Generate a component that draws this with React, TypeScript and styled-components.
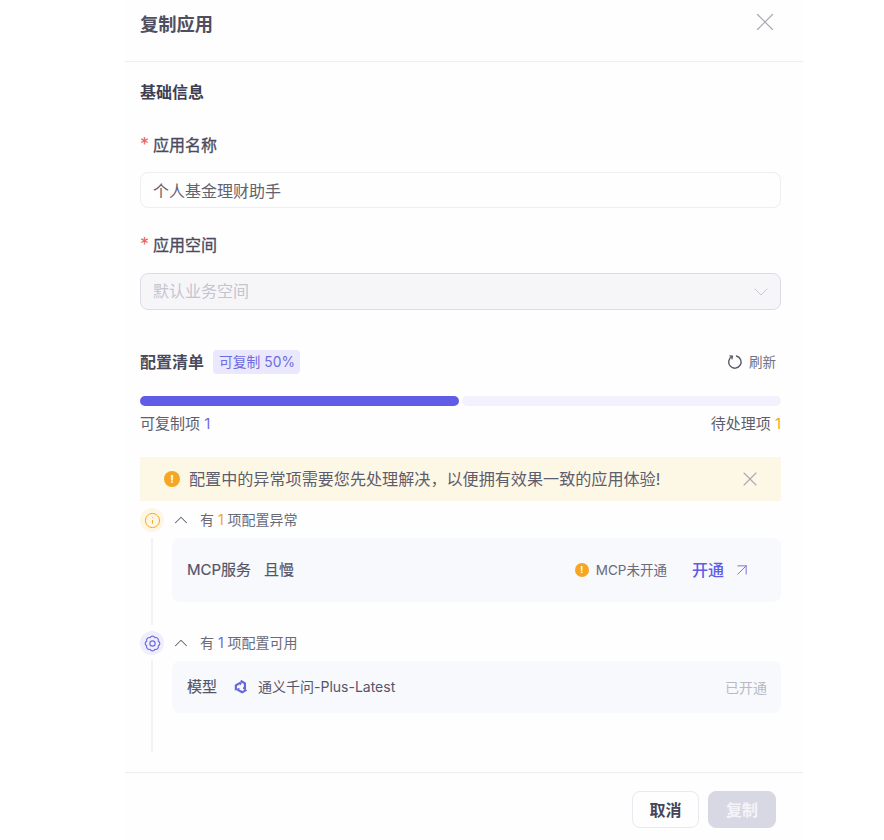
import React from 'react';
import styled, { createGlobalStyle } from 'styled-components';
import { ArrowUpRight, ChevronDown, ChevronUp, Info, X } from 'lucide-react';

const GlobalStyle = createGlobalStyle`
  html, body {
    margin: 0;
    background: #ffffff;
    font-family: Inter, "Noto Sans CJK SC", sans-serif;
  }
`;

const Modal = styled.div`
  box-sizing: border-box;
  width: 678px;
  height: 840px;
  margin-left: 125px;
  background: #fefefe;
  display: flex;
  flex-direction: column;
`;

const Header = styled.header`
  box-sizing: border-box;
  height: 62px;
  padding: 0 23px 12px 15px;
  border-bottom: 1px solid #eeeef2;
  display: flex;
  align-items: center;
  justify-content: space-between;
`;

const Title = styled.h1`
  margin: 0;
  padding-bottom: 2px;
  font-size: 18.3px;
  line-height: 26px;
  font-weight: 600;
  color: #4f4f61;
`;

const CloseIcon = styled(X)`
  color: #a6a6b3;
  margin-top: -5px;
`;

const Body = styled.main`
  flex: 1;
  padding: 18px 22px 0 15px;
  display: flex;
  flex-direction: column;
`;

const SectionTitle = styled.h2`
  margin: 0 0 29px;
  font-size: 16px;
  line-height: 24px;
  font-weight: 600;
  color: #3f3f52;
`;

const FieldLabel = styled.label`
  display: block;
  font-size: 16px;
  line-height: 24px;
  color: #4a4a5c;
  -webkit-text-stroke: 0.3px #4a4a5c;
  margin-bottom: 15px;
`;

const Star = styled.span`
  display: inline-block;
  width: 13px;
  font-size: 18px;
  color: #f0605e;
  -webkit-text-stroke: 0;
`;

const TextBox = styled.div<{ $disabled?: boolean }>`
  box-sizing: border-box;
  height: ${p => (p.$disabled ? 37 : 36)}px;
  margin-top: ${p => (p.$disabled ? 1 : 0)}px;
  margin-bottom: ${p => (p.$disabled ? 40 : 25)}px;
  padding: 0 12px;
  border: 1px solid ${p => (p.$disabled ? '#dcdce6' : '#eeeef3')};
  border-radius: 8px;
  background: ${p => (p.$disabled ? '#f6f6f9' : '#fefefe')};
  color: ${p => (p.$disabled ? '#c4c4cf' : '#62626f')};
  font-size: 16px;
  display: flex;
  align-items: center;
  justify-content: space-between;
`;

const Placeholder = styled.span`
  padding-bottom: 3px;
`;

const SelectArrow = styled(ChevronDown)`
  color: #c9c9d4;
  margin-right: -5px;
`;

const ListHeader = styled.div`
  height: 24px;
  display: flex;
  align-items: center;
  margin-bottom: 22px;
`;

const ListTitle = styled.span`
  padding-bottom: 2px;
  font-size: 16px;
  font-weight: 600;
  color: #4a4a5c;
  margin-right: 9px;
`;

const Tag = styled.span`
  height: 24px;
  padding: 0 5px 0 6px;
  border-radius: 4px;
  background: #e9e8fc;
  color: #6e6bdf;
  font-size: 13.8px;
  line-height: 24px;
`;

const Refresh = styled.span`
  margin-left: auto;
  margin-right: 5px;
  display: flex;
  align-items: center;
  gap: 6px;
  font-size: 13.5px;
  color: #70707e;
`;

const RefreshLabel = styled.span`
  padding-bottom: 2px;
`;

const Progress = styled.div`
  height: 10px;
  display: flex;
  gap: 3px;
`;

const ProgressPart = styled.div<{ $done?: boolean }>`
  flex: 1;
  border-radius: 5px;
  background: ${p => (p.$done ? '#5f5ce6' : '#f2f1fd')};
`;

const Counts = styled.div`
  box-sizing: border-box;
  height: 22px;
  padding-bottom: 2px;
  margin-top: 6px;
  margin-bottom: 23px;
  display: flex;
  justify-content: space-between;
  align-items: center;
  font-size: 15px;
  color: #5d5d6d;
`;

const Num = styled.span<{ $warn?: boolean }>`
  color: ${p => (p.$warn ? '#f5a623' : '#6e6bdf')};
`;

const Notice = styled.div`
  box-sizing: border-box;
  height: 44px;
  margin-bottom: 7px;
  padding: 0 24px;
  background: #fdf7e6;
  display: flex;
  align-items: center;
  gap: 9px;
  font-size: 16.1px;
  color: #5d5d6d;
`;

const NoticeText = styled.span`
  flex: 1;
  padding-bottom: 2px;
`;

const NoticeClose = styled(X)`
  color: #a9a9b2;
  margin-right: -5px;
`;

const WarnDot = styled.span<{ $size: number }>`
  flex: none;
  width: ${p => p.$size}px;
  height: ${p => p.$size}px;
  border-radius: 50%;
  background: #f5a623;
  color: #ffffff;
  font-size: ${p => p.$size - 5}px;
  line-height: ${p => p.$size}px;
  font-weight: 700;
  text-align: center;
`;

const Group = styled.section<{ $height: number }>`
  height: ${p => p.$height}px;
  display: grid;
  grid-template-columns: 24px 1fr;
  column-gap: 8px;
`;

const Rail = styled.div<{ $lineGap: number; $lineEnd: number }>`
  display: flex;
  flex-direction: column;
  align-items: center;
  row-gap: ${p => p.$lineGap}px;
  padding-bottom: ${p => p.$lineEnd}px;
`;

const RailIcon = styled.span<{ $warn?: boolean }>`
  flex: none;
  width: 24px;
  height: 24px;
  border-radius: 50%;
  background: ${p => (p.$warn ? '#fef6e4' : '#efeefd')};
  color: ${p => (p.$warn ? '#f5a623' : '#6e6bdf')};
  display: flex;
  align-items: center;
  justify-content: center;
`;

const RailLine = styled.div`
  flex: 1;
  width: 2px;
  background: #f3f3f6;
`;

const GroupHead = styled.div`
  height: 24px;
  margin-bottom: 6px;
  display: flex;
  align-items: center;
  gap: 8px;
  font-size: 14px;
  color: #6a6a79;
`;

const GroupText = styled.span`
  padding-bottom: 2px;
`;

const Fold = styled(ChevronUp)`
  color: #5d5d6d;
  margin-left: -2px;
`;

const Card = styled.div<{ $height: number }>`
  box-sizing: border-box;
  height: ${p => p.$height}px;
  padding: 0 14px 0 15px;
  border-radius: 8px;
  background: #f8f9fc;
  display: flex;
  align-items: center;
  font-size: 15px;
  color: #55556a;
`;

const CardName = styled.span`
  -webkit-text-stroke: 0.2px #55556a;
  margin-right: 13px;
  padding-bottom: 3px;
`;

const LogoMark = styled.svg`
  margin-left: 3px;
`;

const ModelName = styled.span`
  font-size: 14px;
  margin-left: 9px;
  padding-bottom: 2px;
`;

const CardRight = styled.div`
  margin-left: auto;
  display: flex;
  align-items: center;
  font-size: 14px;
`;

const Status = styled.span`
  font-size: 13.5px;
  margin-left: 7px;
  margin-right: 25px;
  padding-bottom: 2px;
  color: #6a6a79;
`;

const OpenLink = styled.a`
  font-size: 16px;
  font-weight: 500;
  color: #5f5ce6;
  margin-right: 8px;
  padding-bottom: 2px;
`;

const OpenArrow = styled(ArrowUpRight)`
  color: #6e6bdf;
  margin-right: 15px;
`;

const Muted = styled.span`
  color: #b9b9c6;
`;

const Footer = styled.footer`
  box-sizing: border-box;
  height: 68px;
  padding: 18px 27px 12px 0;
  border-top: 1px solid #eeeef2;
  display: flex;
  justify-content: flex-end;
  gap: 9px;
`;

const Button = styled.button<{ $primary?: boolean }>`
  width: ${p => (p.$primary ? 68 : 67)}px;
  height: 37px;
  padding: 0 0 2px;
  border-radius: 8px;
  border: 1px solid ${p => (p.$primary ? '#d8d7e4' : '#e9e9ef')};
  background: ${p => (p.$primary ? '#d8d7e4' : '#fefefe')};
  color: ${p => (p.$primary ? '#f4f4f8' : '#45455a')};
  font-family: inherit;
  font-size: 16px;
  font-weight: 600;
`;

const RefreshIcon = () => (
  <svg width="16" height="16" viewBox="0 0 16 16" fill="none" stroke="#55556a" strokeWidth="1.4" strokeLinecap="round">
    <path d="M5.2 2.4A6.2 6.2 0 1 0 9.5 2" />
    <path d="M2.9 1.9 5.4 2.3 5 4.8" strokeWidth="1.2" />
  </svg>
);

// eight shallow lobes round the centre
const flowerPath = () => {
  const points = Array.from({ length: 8 }, (_, i) => {
    const a = ((i * 45 + 22.5) * Math.PI) / 180;
    return `${(8 + 5.9 * Math.cos(a)).toFixed(2)} ${(8 + 5.9 * Math.sin(a)).toFixed(2)}`;
  });
  const arcs = [...points.slice(1), points[0]].map(pt => `A2.5 2.5 0 0 1 ${pt}`);
  return `M${points[0]} ${arcs.join(' ')}Z`;
};

const GearIcon = () => (
  <svg width="17" height="17" viewBox="0 0 16 16" fill="none" stroke="currentColor" strokeWidth="1.1" strokeLinejoin="round">
    <path d={flowerPath()} />
    <circle cx="8" cy="8" r="2.5" />
  </svg>
);

const ModelLogo = () => (
  <LogoMark width="16" height="16" viewBox="0 0 16 16" fill="#6663dc">
    {[30, 150, 270].map(angle => (
      <path key={angle} transform={`rotate(${angle} 8 8)`} d="M4.4 1.8h5.8l3.4 5.8h-2.4L8.9 3.9H6.2l.9 1.7-1.2 1.6z" />
    ))}
  </LogoMark>
);

const App: React.FC = () => {
  return (
    <Modal>
      <GlobalStyle />
      <Header>
        <Title>复制应用</Title>
        <CloseIcon size={30} strokeWidth={0.9} />
      </Header>

      <Body>
        <SectionTitle>基础信息</SectionTitle>

        <FieldLabel><Star>*</Star>应用名称</FieldLabel>
        <TextBox>个人基金理财助手</TextBox>

        <FieldLabel><Star>*</Star>应用空间</FieldLabel>
        <TextBox $disabled>
          <Placeholder>默认业务空间</Placeholder>
          <SelectArrow size={24} strokeWidth={1} />
        </TextBox>

        <ListHeader>
          <ListTitle>配置清单</ListTitle>
          <Tag>可复制 50%</Tag>
          <Refresh><RefreshIcon /><RefreshLabel>刷新</RefreshLabel></Refresh>
        </ListHeader>

        <Progress>
          <ProgressPart $done />
          <ProgressPart />
        </Progress>
        <Counts>
          <span>可复制项 <Num>1</Num></span>
          <span>待处理项 <Num $warn>1</Num></span>
        </Counts>

        <Notice>
          <WarnDot $size={16}>!</WarnDot>
          <NoticeText>配置中的异常项需要您先处理解决，以便拥有效果一致的应用体验!</NoticeText>
          <NoticeClose size={24} strokeWidth={1.1} />
        </Notice>

        <Group $height={123}>
          <Rail $lineGap={6} $lineEnd={6}>
            <RailIcon $warn><Info size={17} strokeWidth={1.4} /></RailIcon>
            <RailLine />
          </Rail>
          <div>
            <GroupHead>
              <Fold size={22} strokeWidth={1.1} />
              <GroupText>有 <Num $warn>1</Num> 项配置异常</GroupText>
            </GroupHead>
            <Card $height={64}>
              <CardName>MCP服务</CardName>
              <CardName>且慢</CardName>
              <CardRight>
                <WarnDot $size={14}>!</WarnDot>
                <Status>MCP未开通</Status>
                <OpenLink>开通</OpenLink>
                <OpenArrow size={20} strokeWidth={1.1} />
              </CardRight>
            </Card>
          </div>
        </Group>

        <Group $height={121}>
          <Rail $lineGap={5} $lineEnd={0}>
            <RailIcon><GearIcon /></RailIcon>
            <RailLine />
          </Rail>
          <div>
            <GroupHead>
              <Fold size={22} strokeWidth={1.1} />
              <GroupText>有 <Num>1</Num> 项配置可用</GroupText>
            </GroupHead>
            <Card $height={52}>
              <CardName>模型</CardName>
              <ModelLogo />
              <ModelName>通义千问-Plus-Latest</ModelName>
              <CardRight><Muted>已开通</Muted></CardRight>
            </Card>
          </div>
        </Group>
      </Body>

      <Footer>
        <Button>取消</Button>
        <Button $primary>复制</Button>
      </Footer>
    </Modal>
  );
};

export default App;
